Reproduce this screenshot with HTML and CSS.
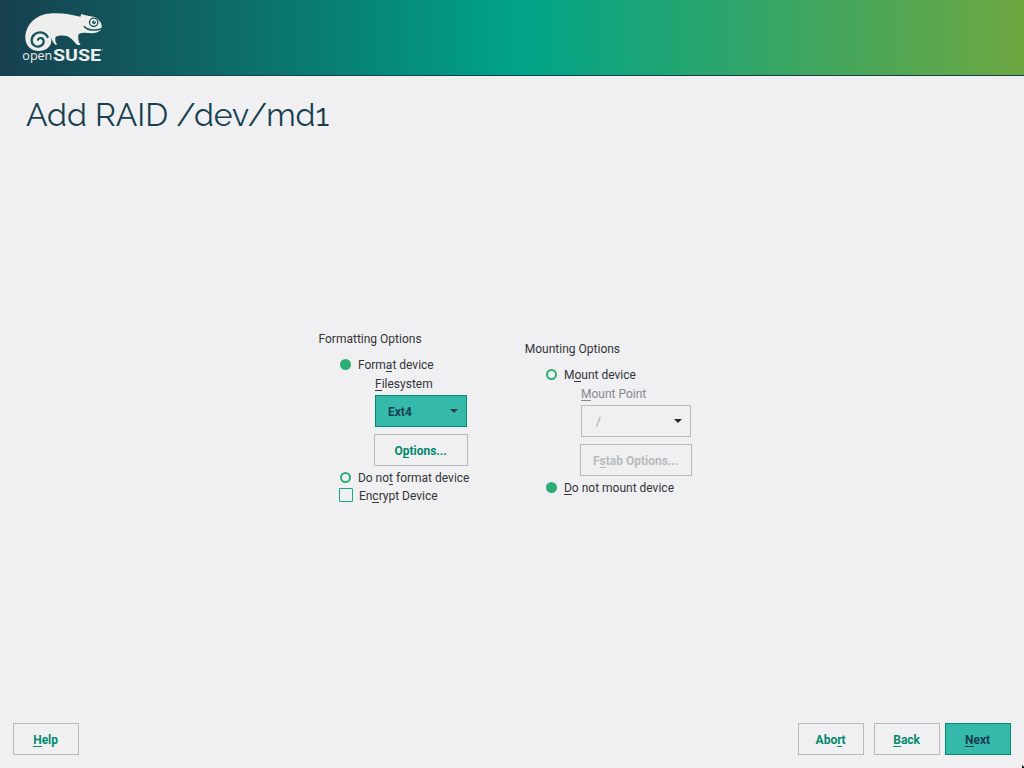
FILE: index.html
```html
<!DOCTYPE html>
<html lang="en">
<head>
<meta charset="utf-8">
<title>Add RAID /dev/md1</title>
<link rel="stylesheet" href="styles.css">
</head>
<body>
<header class="banner">
  <svg class="logo" viewBox="0 0 300 225" role="img" aria-label="openSUSE">
    <path class="body" d="M74 138C48 139 31 121 31 98C31 64 58 30 100 26C135 22 167 28 196 35L199 27L211 31L239 36C247 39 251 45 256 51C260 57 261 64 260 71C253 82 238 86 217 84C203 82 195 84 190 89C189 98 189 110 197 120L187 120C178 113 170 99 157 94C145 90 130 92 122 95C119 103 121 113 127 119L121 119C114 113 110 104 107 96C115 121 97 136 74 138Z"/>
    <path class="spiral" d="M98 96C91 81 73 79 60 87C46 97 47 116 60 123C73 129 87 120 86 108C85 98 73 96 69 104"/>
    <path class="mouth" d="M208 65C218 76 241 79 261 70"/>
    <circle class="eye" cx="236" cy="52" r="12.5"/>
    <circle class="pupil" cx="237" cy="52" r="5.5"/>
    <circle class="glint" cx="239" cy="50" r="1.8"/>
    <text class="open" x="22" y="165" textLength="90" lengthAdjust="spacingAndGlyphs">open</text>
    <text class="suse" x="114" y="167" textLength="144" lengthAdjust="spacingAndGlyphs">SUSE</text>
    <circle class="mark" cx="262" cy="135" r="1.6"/>
  </svg>
</header>
<main class="page">
  <h1 class="title">Add RAID /dev/md1</h1>
  <div class="groups">
    <section class="group">
      <h2 class="legend">Formatting Options</h2>
      <div class="choice"><i class="radio on"></i><span>Form<u>a</u>t device</span></div>
      <div class="nested">
        <div class="label"><u>F</u>ilesystem</div>
        <div class="combo active"><span>Ext4</span><i class="arrow"></i></div>
        <div class="btn opts">O<u>p</u>tions...</div>
      </div>
      <div class="choice"><i class="radio"></i><span>Do no<u>t</u> format device</span></div>
      <div class="choice"><i class="check"></i><span>En<u>c</u>rypt Device</span></div>
    </section>
    <section class="group mount">
      <h2 class="legend">Mounting Options</h2>
      <div class="choice"><i class="radio"></i><span>M<u>o</u>unt device</span></div>
      <div class="nested">
        <div class="label dim"><u>M</u>ount Point</div>
        <div class="combo wide"><span>/</span><i class="arrow"></i></div>
        <div class="btn opts wide off">F<u>s</u>tab Options...</div>
      </div>
      <div class="choice"><i class="radio on"></i><span><u>D</u>o not mount device</span></div>
    </section>
  </div>
</main>
<footer class="actions">
  <div class="btn help"><u>H</u>elp</div>
  <div class="btn">Abo<u>r</u>t</div>
  <div class="btn back"><u>B</u>ack</div>
  <div class="btn next"><u>N</u>ext</div>
</footer>
<svg class="cursor" viewBox="0 0 2 3"><path d="M0 0L2 2V3H0Z"/></svg>
</body>
</html>
```
FILE: styles.css
```css
* { box-sizing: border-box; }
body {
  margin: 0;
  width: 1024px;
  height: 768px;
  overflow: hidden;
  display: flex;
  flex-direction: column;
  background: #f0f0f3;
  color: #333537;
  font: 12px/18px Roboto, sans-serif;
}
u {
  text-decoration: none;
  display: inline-block;
  height: 16px;
  line-height: 18px;
  vertical-align: top;
  border-bottom: 1px solid currentColor;
}
.banner {
  height: 76px;
  flex: none;
  padding: 5px 0 0 15px;
  background: linear-gradient(90deg, #173f4f 0%, #00a489 51%, #6da741 100%);
  border-bottom: 1px solid #173f4f;
}
.logo { display: block; width: 100px; height: 75px; overflow: visible; }
.body, .glint, .mark { fill: #eeeeec; }
.spiral, .mouth { fill: none; stroke: #17515a; stroke-width: 6.5; stroke-linecap: round; }
.mouth { stroke-width: 4.5; }
.eye { fill: #eeeeec; stroke: #17515a; stroke-width: 4; }
.pupil { fill: #17515a; }
.open, .suse { fill: #eeeeec; font-family: "Open Sans", sans-serif; }
.open { font-size: 40px; }
.suse { font-family: Roboto, sans-serif; font-size: 49px; font-weight: 700; }
.page { flex: 1; display: flex; flex-direction: column; }
.title {
  margin: 0;
  padding: 18px 0 0 26px;
  height: 62px;
  font: 400 32px/42px Raleway, sans-serif;
  letter-spacing: -0.04px;
  color: #173f4f;
  white-space: nowrap;
}
.groups { display: flex; padding: 192px 0 0 318.5px; }
.group { width: 206.3px; }
.mount { padding-top: 10px; }
.legend { margin: 0 0 8px; font: inherit; }
.choice { display: flex; height: 18px; padding-left: 21.4px; white-space: pre; }
.mount .choice { padding-left: 21.2px; }
.radio { width: 11px; height: 11px; margin: 3px 7px 0 0; border: 2px solid #2bae76; border-radius: 50%; flex: none; }
.radio.on { background: #2bae76; }
.check { width: 14px; height: 14px; margin: 1px 6px 0 -1px; border: 1px solid #10ab83; border-radius: 1px; flex: none; }
.nested { padding: 1px 0 3px 56.5px; }
.mount .nested { padding-left: 56.2px; }
.label { height: 20px; }
.dim { color: #87888a; }
.combo {
  width: 92px;
  height: 32px;
  border: 1px solid #b9babc;
  padding: 0 8px 0 12px;
  display: flex;
  justify-content: space-between;
  align-items: center;
  color: #a5a6a8;
}
.combo span { padding-top: 2px; }
.combo.wide { width: 110px; padding-left: 14px; }
.combo.active { background: #35b9ab; border-color: #008a6e; color: #173f4f; font-weight: 700; }
.arrow { border: 4px solid transparent; border-top: 4px solid #25282a; border-bottom: 0; }
.active .arrow { border-top-color: #303b3d; }
.btn {
  width: 66px;
  height: 32px;
  border: 1px solid #b9babc;
  padding: 7px 0.8px 0 0;
  text-align: center;
  color: #028a6e;
  font-weight: 700;
  white-space: nowrap;
}
.opts { width: 94px; margin: 7px 0 0 -1px; }
.opts.wide { width: 112px; }
.off { color: #babbbd; }
.actions { display: flex; height: 45px; flex: none; padding: 0 13px; }
.help { margin-right: auto; }
.back { margin-left: 10px; }
.next { margin-left: 5px; background: #35b9ab; border-color: #008a6e; color: #173f4f; }
.cursor { position: absolute; right: 0; bottom: 0; width: 2px; height: 3px; }
```
